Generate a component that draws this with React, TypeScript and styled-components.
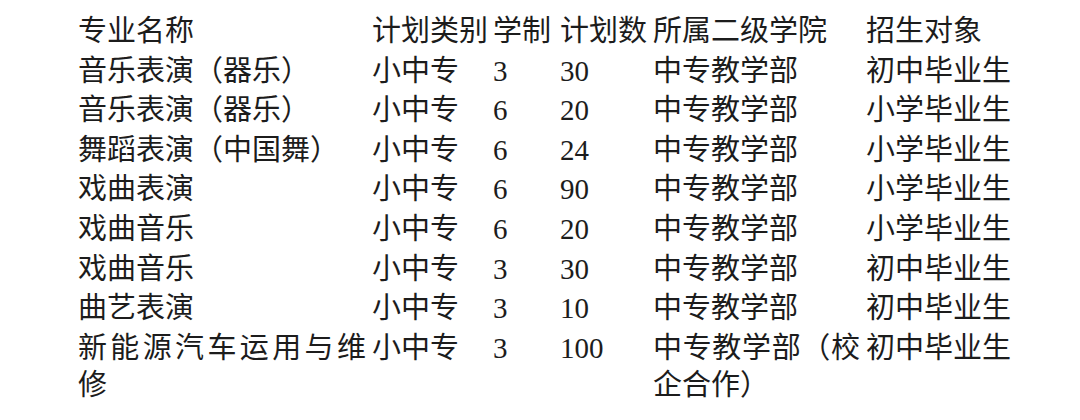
import React from "react";
import styled, { createGlobalStyle } from "styled-components";

const GlobalStyle = createGlobalStyle`
  html, body {
    margin: 0;
    padding: 0;
    background: #ffffff;
    overflow: hidden;
  }
`;

const Page = styled.div`
  width: 1080px;
  height: 420px;
  box-sizing: border-box;
  padding: 13px 0 0 78px;
  color: #1c1c1c;
  font-family: "Liberation Serif", "Noto Sans CJK SC", serif;
  font-size: 29px;
`;

const Table = styled.div`
  display: grid;
  grid-template-columns: 294px 121px 67px 93px 213px 160px;
  row-gap: 2.6px;
`;

const Cell = styled.div<{ $pad?: number }>`
  line-height: 37px;
  padding-right: ${(p) => p.$pad ?? 0}px;
  text-align: justify;
  white-space: normal;
  word-break: break-all;
`;

type Row = [string, string, string, string, string, string];

const header: Row = ["专业名称", "计划类别", "学制", "计划数", "所属二级学院", "招生对象"];

const rows: Row[] = [
  ["音乐表演（器乐）", "小中专", "3", "30", "中专教学部", "初中毕业生"],
  ["音乐表演（器乐）", "小中专", "6", "20", "中专教学部", "小学毕业生"],
  ["舞蹈表演（中国舞）", "小中专", "6", "24", "中专教学部", "小学毕业生"],
  ["戏曲表演", "小中专", "6", "90", "中专教学部", "小学毕业生"],
  ["戏曲音乐", "小中专", "6", "20", "中专教学部", "小学毕业生"],
  ["戏曲音乐", "小中专", "3", "30", "中专教学部", "初中毕业生"],
  ["曲艺表演", "小中专", "3", "10", "中专教学部", "初中毕业生"],
  ["新能源汽车运用与维修", "小中专", "3", "100", "中专教学部（校企合作）", "初中毕业生"],
];

const pads = [6, 0, 0, 0, 6, 0];

export default function App() {
  return (
    <>
      <GlobalStyle />
      <Page>
        <Table>
          {[header, ...rows].map((row, r) =>
            row.map((text, c) => (
              <Cell key={`${r}-${c}`} $pad={pads[c]}>
                {text}
              </Cell>
            ))
          )}
        </Table>
      </Page>
    </>
  );
}
